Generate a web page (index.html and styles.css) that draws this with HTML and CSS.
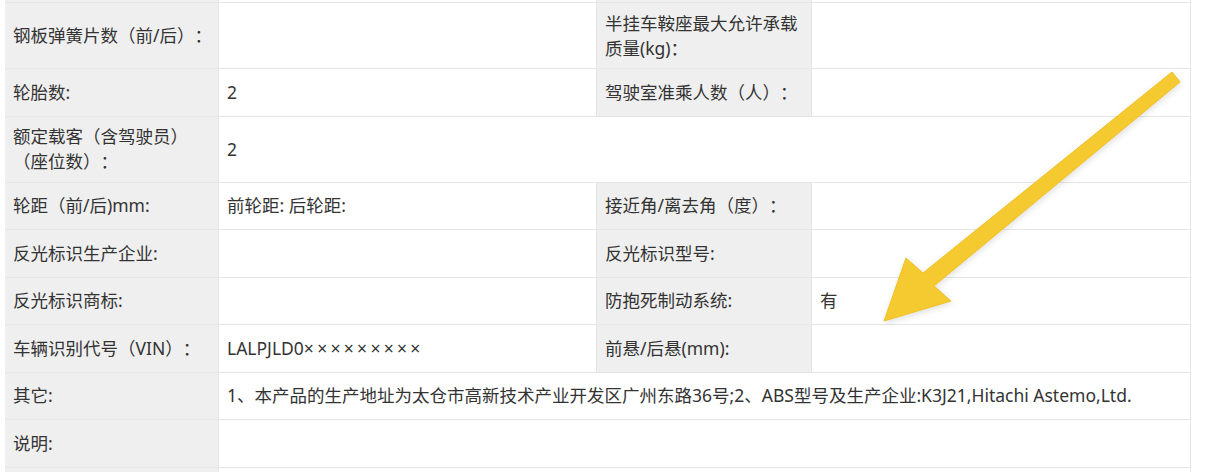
FILE: index.html
```html
<!DOCTYPE html>
<html lang="zh-CN">
<head>
<meta charset="utf-8">
<title>车辆参数</title>
<link rel="stylesheet" href="styles.css">
</head>
<body>
<div class="page">
  <div class="spec">
    <div class="cell label"></div><div class="cell value"></div><div class="cell label"></div><div class="cell value"></div>

    <div class="cell label">钢板弹簧片数（前/后）：</div><div class="cell value"></div>
    <div class="cell label">半挂车鞍座最大允许承载质量(kg)：</div><div class="cell value"></div>

    <div class="cell label">轮胎数:</div><div class="cell value">2</div>
    <div class="cell label">驾驶室准乘人数（人）：</div><div class="cell value"></div>

    <div class="cell label">额定载客（含驾驶员）（座位数）：</div><div class="cell value wide">2</div>

    <div class="cell label">轮距（前/后)mm:</div><div class="cell value">前轮距: 后轮距:</div>
    <div class="cell label">接近角/离去角（度）：</div><div class="cell value"></div>

    <div class="cell label">反光标识生产企业:</div><div class="cell value"></div>
    <div class="cell label">反光标识型号:</div><div class="cell value"></div>

    <div class="cell label">反光标识商标:</div><div class="cell value"></div>
    <div class="cell label">防抱死制动系统:</div><div class="cell value">有</div>

    <div class="cell label">车辆识别代号（VIN）：</div><div class="cell value"><span>LALPJLD0<span class="mask">×××××××××</span></span></div>
    <div class="cell label">前悬/后悬(mm):</div><div class="cell value"></div>

    <div class="cell label">其它:</div><div class="cell value wide">1、本产品的生产地址为太仓市高新技术产业开发区广州东路36号;2、ABS型号及生产企业:K3J21,Hitachi Astemo,Ltd.</div>

    <div class="cell label">说明:</div><div class="cell value wide"></div>

    <div class="cell label"></div><div class="cell value wide"></div>
  </div>

  <svg class="arrow" width="1227" height="472" viewBox="0 0 1227 472" aria-hidden="true">
    <polygon points="1172,72 923,273 906,258 884,321 951,301 934,286 1180,82" />
  </svg>
</div>
</body>
</html>
```

FILE: styles.css
```css
html, body {
  margin: 0;
  padding: 0;
  background: #ffffff;
}

body {
  font-family: "Noto Sans", "Noto Sans CJK SC", sans-serif;
  font-size: 17.5px;
  line-height: 25px;
  color: #333333;
  overflow: hidden;
  width: 1227px;
  height: 472px;
  text-spacing-trim: space-all;
}

.page {
  position: relative;
  width: 1227px;
  height: 472px;
  overflow: hidden;
}

.spec {
  display: grid;
  grid-template-columns: 214px 378px 215px 379px;
  grid-auto-rows: minmax(47.5px, auto);
  margin: -44.5px 0 0 5px;
  width: 1186px;
}

.cell {
  display: flex;
  align-items: center;
  box-sizing: border-box;
  padding: 7.5px 4px 7.5px 8px;
  border-right: 1px solid #e6e6e6;
  border-bottom: 1px solid #e6e6e6;
}

.label {
  background: #efefef;
}

.value {
  background: #ffffff;
}

.wide {
  grid-column: span 3;
}

.mask {
  letter-spacing: 3.3px;
}

.arrow {
  position: absolute;
  left: 0;
  top: 0;
  pointer-events: none;
  filter: drop-shadow(1px 2px 3px rgba(0, 0, 0, 0.12));
}

.arrow polygon {
  fill: #f5c930;
  stroke: #f0c024;
  stroke-width: 1;
  stroke-linejoin: round;
}
```
